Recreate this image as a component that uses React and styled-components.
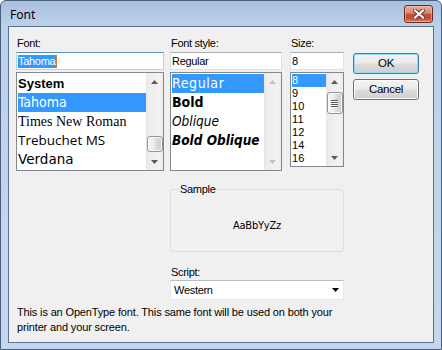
import React from "react";
import styled, { createGlobalStyle } from "styled-components";

const GlobalStyle = createGlobalStyle`
  html, body {
    margin: 0;
    padding: 0;
    background: #fff;
  }
  * {
    box-sizing: border-box;
  }
`;

const Window = styled.div`
  width: 442px;
  height: 350px;
  border: 1px solid #4a5f7c;
  border-radius: 6px 6px 0 0;
  background: linear-gradient(#a9c0de 0, #bcd1ea 25px, #c4d7ee 100%);
  display: flex;
  flex-direction: column;
  font-family: "Liberation Sans", Arial, sans-serif;
  font-size: 11px;
  letter-spacing: -0.3px;
  color: #000;
`;

const TitleBar = styled.div`
  height: 25px;
  display: flex;
  align-items: flex-start;
  justify-content: space-between;
  padding: 0 8px 0 8px;
`;

const Title = styled.div`
  font-family: "Noto Sans", "Open Sans", sans-serif;
  font-size: 12px;
  letter-spacing: 0;
  line-height: 16px;
  margin-top: 6px;
  margin-left: 1px;
`;

const CloseButton = styled.div`
  width: 29px;
  height: 18px;
  margin-top: 4px;
  border: 1px solid #6b2a20;
  border-radius: 3px;
  background: linear-gradient(#e9a899 0, #d98a74 45%, #c5523a 50%, #c14a32 75%, #d8826a 100%);
  box-shadow: inset 0 0 0 1px rgba(255, 220, 210, 0.45);
  display: flex;
  align-items: center;
  justify-content: center;
`;

const Client = styled.div`
  flex: 1;
  margin: 0 7px 6px;
  border: 1px solid #5d7290;
  background: #f0f0f0;
  padding: 10px 0 0 7px;
`;

const TopRow = styled.div`
  display: flex;
  align-items: flex-start;
`;

const Column = styled.div`
  width: ${(p) => p.$w}px;
  margin-left: ${(p) => p.$gap || 0}px;
  display: flex;
  flex-direction: column;
`;

const Label = styled.div`
  height: 13px;
  line-height: 13px;
  margin-bottom: 2px;
  padding-left: 1px;
`;

const TextBox = styled.div`
  height: 18px;
  margin-bottom: 2px;
  background: #fff;
  border: 1px solid ${(p) => (p.$focused ? "#b7d5ea" : "#dbe2ea")};
  border-top-color: ${(p) => (p.$focused ? "#5794bf" : "#abadb3")};
  display: flex;
  align-items: center;
  padding-left: 1px;
  line-height: 13px;
`;

const Selection = styled.span`
  background: #3399ff;
  color: #fff;
  padding: 0 1px 0 0;
  line-height: 13px;
`;

const Caret = styled.span`
  width: 1px;
  height: 13px;
  background: #d97a1a;
`;

const ListBox = styled.div`
  height: ${(p) => p.$h}px;
  background: #fff;
  border: 1px solid #828790;
  display: flex;
`;

const Items = styled.div`
  flex: 1;
  padding: 1px 0 0 1px;
  overflow: hidden;
`;

const Item = styled.div`
  height: ${(p) => p.$h}px;
  line-height: ${(p) => p.$h}px;
  white-space: nowrap;
  background: ${(p) => (p.$selected ? "#3399ff" : "transparent")};
  color: ${(p) => (p.$selected ? "#fff" : "#000")};
  font-family: ${(p) => p.$font || "inherit"};
  font-size: ${(p) => p.$size || 11}px;
  font-weight: ${(p) => (p.$bold ? 700 : 400)};
  font-style: ${(p) => (p.$italic ? "oblique" : "normal")};
  letter-spacing: ${(p) => p.$ls ?? 0}px;
`;

const ScrollBar = styled.div`
  width: 17px;
  display: flex;
  flex-direction: column;
  background: linear-gradient(to right, #e4e4e4 0, #ededed 2px, #f2f2f2 14px, #ececec 100%);
`;

const ArrowButton = styled.div`
  height: 17px;
  display: flex;
  align-items: center;
  justify-content: center;
`;

const Track = styled.div`
  flex: 1;
  display: flex;
  flex-direction: column;
  align-items: center;
`;

const Thumb = styled.div`
  width: 16px;
  height: ${(p) => p.$h}px;
  margin-top: ${(p) => p.$top}px;
  border: 1px solid #959595;
  border-radius: 3px;
  background: linear-gradient(to right, #f5f5f5 0, #ececec 45%, #dcdcdc 55%, #cfcfcf 100%);
  box-shadow: inset 0 0 0 1px #fbfbfb;
  display: flex;
  flex-direction: column;
  align-items: center;
  justify-content: center;
  gap: 1px;
`;

const Grip = styled.div`
  width: 7px;
  height: 1px;
  background: #5a5a5a;
  box-shadow: 0 1px 0 #f8f8f8;
`;

const ButtonStack = styled.div`
  margin-left: 9px;
  margin-top: 16px;
  display: flex;
  flex-direction: column;
  gap: 5px;
`;

const PushButton = styled.div`
  width: 66px;
  height: 21px;
  border: 1px solid ${(p) => (p.$default ? "#3c7fb1" : "#707070")};
  border-radius: 3px;
  background: linear-gradient(#f2f2f2 0, #ebebeb 48%, #dddddd 52%, #cfcfcf 100%);
  box-shadow: inset 0 0 0 1px ${(p) => (p.$default ? "#8fdcf7" : "#fcfcfc")};
  display: flex;
  align-items: center;
  justify-content: center;
  line-height: 13px;
  font-size: 11.5px;
`;

const LowerPane = styled.div`
  width: 174px;
  margin-left: 154px;
  display: flex;
  flex-direction: column;
`;

const Group = styled.fieldset`
  margin: 12px 0 0;
  padding: 0;
  height: 69px;
  border: 1px solid #d5dfe5;
  border-radius: 3px;
  min-width: 0;
`;

const Legend = styled.legend`
  margin-left: 8px;
  padding: 0 1px;
  line-height: 13px;
`;

const SampleText = styled.div`
  height: 55px;
  padding-top: 4px;
  display: flex;
  align-items: center;
  justify-content: center;
  font-family: "DejaVu Sans Condensed", "DejaVu Sans", sans-serif;
  font-size: 11px;
  letter-spacing: -0.2px;
`;

const ScriptLabel = styled(Label)`
  margin-top: 14px;
  margin-bottom: 1px;
`;

const Combo = styled.div`
  height: 20px;
  background: #fff;
  border: 1px solid #e3e9ef;
  border-top-color: #b8bcc4;
  display: flex;
  align-items: center;
  justify-content: space-between;
  padding: 0 4px 0 3px;
`;

const Note = styled.div`
  margin: 5px 0 0 1px;
  line-height: 15px;
  white-space: nowrap;
  letter-spacing: -0.15px;
`;

function Arrow({ up, color = "#555" }) {
  return (
    <svg width="7" height="4" viewBox="0 0 7 4">
      <path d={up ? "M0 4 L3.5 0 L7 4 Z" : "M0 0 L7 0 L3.5 4 Z"} fill={color} />
    </svg>
  );
}

function VScroll({ thumb, disabled }) {
  const c = disabled ? "#c2c2c2" : "#5c5c5c";
  return (
    <ScrollBar>
      <ArrowButton>
        <Arrow up color={c} />
      </ArrowButton>
      <Track>
        {thumb && (
          <Thumb $top={thumb.top} $h={thumb.h}>
            {thumb.grip && (
              <>
                <Grip />
                <Grip />
                <Grip />
                <Grip />
              </>
            )}
          </Thumb>
        )}
      </Track>
      <ArrowButton>
        <Arrow color={c} />
      </ArrowButton>
    </ScrollBar>
  );
}

const fonts = [
  { name: "System", font: '"Liberation Sans", Arial, sans-serif', size: 13, bold: true },
  { name: "Tahoma", font: '"DejaVu Sans Condensed", "DejaVu Sans", sans-serif', size: 14, selected: true },
  { name: "Times New Roman", font: '"Liberation Serif", serif', size: 14 },
  { name: "Trebuchet MS", font: '"Open Sans", sans-serif', size: 13.5 },
  { name: "Verdana", font: '"DejaVu Sans", sans-serif', size: 13.5 },
];

const tahoma = '"DejaVu Sans Condensed", "DejaVu Sans", sans-serif';

const styles = [
  { name: "Regular", size: 14, selected: true, ls: 0.6 },
  { name: "Bold", size: 14, bold: true },
  { name: "Oblique", size: 13.5, italic: true },
  { name: "Bold Oblique", size: 13.5, bold: true, italic: true },
];

const sizes = ["8", "9", "10", "11", "12", "14", "16"];

export default function App() {
  return (
    <>
      <GlobalStyle />
      <Window>
        <TitleBar>
          <Title>Font</Title>
          <CloseButton>
            <svg width="12" height="10" viewBox="0 0 12 10">
              <path d="M2 1.5 L10 8.5 M10 1.5 L2 8.5" stroke="#6b2a20" strokeWidth="4" strokeLinecap="square" />
              <path d="M2 1.5 L10 8.5 M10 1.5 L2 8.5" stroke="#fff" strokeWidth="2.2" strokeLinecap="square" />
            </svg>
          </CloseButton>
        </TitleBar>
        <Client>
          <TopRow>
            <Column $w={148}>
              <Label>Font:</Label>
              <TextBox $focused>
                <Selection>Tahoma</Selection>
                <Caret />
              </TextBox>
              <ListBox $h={99}>
                <Items>
                  {fonts.map((f) => (
                    <Item
                      key={f.name}
                      $h={19}
                      $font={f.font}
                      $size={f.size}
                      $bold={f.bold}
                      $selected={f.selected}
                    >
                      {f.name}
                    </Item>
                  ))}
                </Items>
                <VScroll thumb={{ top: 46, h: 16 }} />
              </ListBox>
            </Column>
            <Column $w={112} $gap={6}>
              <Label>Font style:</Label>
              <TextBox>Regular</TextBox>
              <ListBox $h={99}>
                <Items>
                  {styles.map((s) => (
                    <Item
                      key={s.name}
                      $h={19}
                      $font={tahoma}
                      $size={s.size}
                      $bold={s.bold}
                      $italic={s.italic}
                      $selected={s.selected}
                      $ls={s.ls}
                    >
                      {s.name}
                    </Item>
                  ))}
                </Items>
                <VScroll disabled />
              </ListBox>
            </Column>
            <Column $w={54} $gap={8}>
              <Label>Size:</Label>
              <TextBox>8</TextBox>
              <ListBox $h={95}>
                <Items>
                  {sizes.map((s, i) => (
                    <Item key={s} $h={13} $size={11} $ls={0.2} $selected={i === 0}>
                      {s}
                    </Item>
                  ))}
                </Items>
                <VScroll thumb={{ top: 2, h: 22, grip: true }} />
              </ListBox>
            </Column>
            <ButtonStack>
              <PushButton $default>OK</PushButton>
              <PushButton>Cancel</PushButton>
            </ButtonStack>
          </TopRow>
          <LowerPane>
            <Group>
              <Legend>Sample</Legend>
              <SampleText>AaBbYyZz</SampleText>
            </Group>
            <ScriptLabel>Script:</ScriptLabel>
            <Combo>
              <span>Western</span>
              <Arrow color="#000" />
            </Combo>
          </LowerPane>
          <Note>
            This is an OpenType font. This same font will be used on both your
            <br />
            printer and your screen.
          </Note>
        </Client>
      </Window>
    </>
  );
}
